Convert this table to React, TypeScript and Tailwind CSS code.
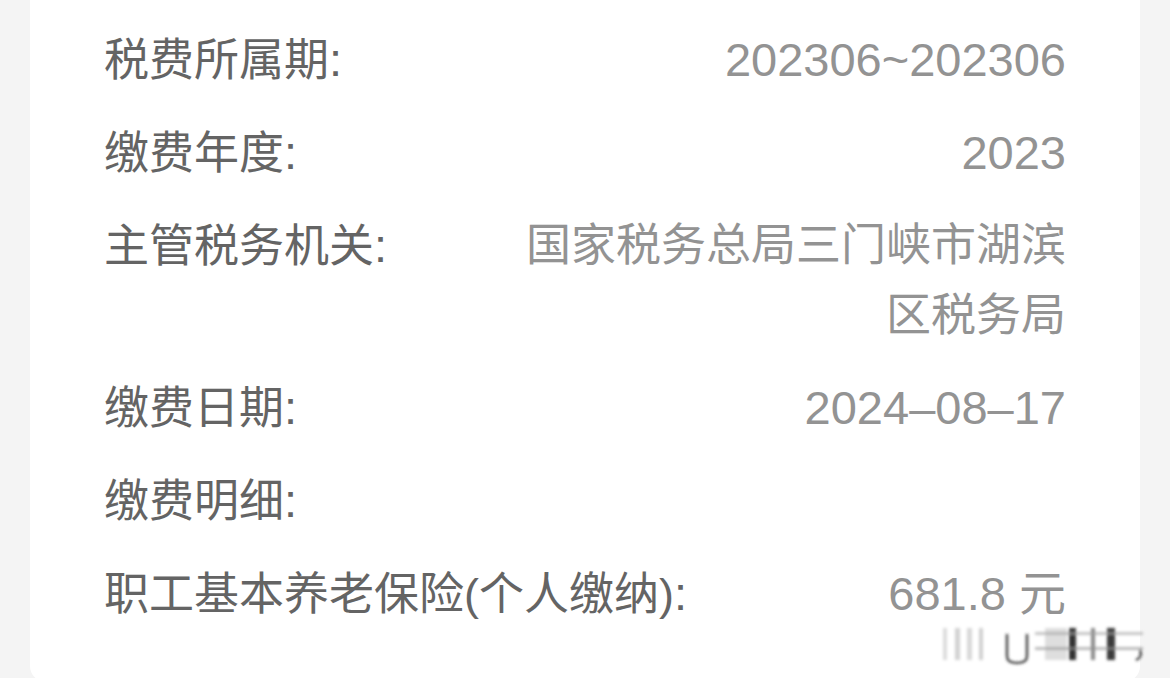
const rows: { label: string; value: string; num?: boolean }[] = [
  { label: "税费所属期", value: "202306~202306", num: true },
  { label: "缴费年度", value: "2023", num: true },
  { label: "主管税务机关", value: "国家税务总局三门峡市湖滨区税务局" },
  { label: "缴费日期", value: "2024–08–17", num: true },
  { label: "缴费明细", value: "" },
  { label: "职工基本养老保险(个人缴纳)", value: "681.8 元", num: true },
];

function Watermark() {
  // cut-off, blurry watermark in the bottom right corner
  return (
    <svg className="absolute left-[935px] top-[620px]" width="215" height="50" viewBox="0 0 215 50">
      <defs>
        <filter id="blur" x="-20%" y="-20%" width="140%" height="140%">
          <feGaussianBlur stdDeviation="1.4" />
        </filter>
      </defs>
      <g filter="url(#blur)">
        <rect x="8" y="8" width="4" height="32" fill="#dcdcdc" />
        <rect x="20" y="8" width="5" height="32" fill="#d2d2d2" />
        <rect x="32" y="8" width="5" height="32" fill="#d8d8d8" />
        <rect x="44" y="8" width="4" height="32" fill="#d0d0d0" />
        <path d="M72 14 V36 Q72 43 82 43 Q92 43 92 36 V14" fill="none" stroke="#333" strokeWidth="2.2" />
        <rect x="110" y="8" width="22" height="32" fill="#dedede" />
        <rect x="134" y="8" width="7" height="32" fill="#333" />
        <rect x="156" y="8" width="4" height="32" fill="#8a8a8a" />
        <rect x="172" y="8" width="8" height="32" fill="#3a3a3a" />
        <rect x="100" y="12" width="108" height="3" fill="#a0a0a0" opacity="0.6" />
        <rect x="100" y="27" width="108" height="3" fill="#909090" opacity="0.6" />
        <path d="M205 30 Q208 37 201 40" fill="none" stroke="#222" strokeWidth="2" />
      </g>
    </svg>
  );
}

export default function App() {
  return (
    <div
      className="relative w-[1170px] h-[678px] overflow-hidden bg-[#f4f4f4] px-[30px]"
      style={{ fontFamily: '"Liberation Sans", "Noto Sans CJK SC", sans-serif' }}
    >
      <div className="bg-white rounded-b-[16px] px-[74px] pt-[25px] pb-[52px] flex flex-col gap-[22px]">
        {rows.map((r) => (
          <div key={r.label} className="flex justify-between items-start leading-[70px]">
            <span className="whitespace-nowrap text-[45px] text-[#646464]">
              {r.label}
              <span className="text-[47px]">:</span>
            </span>
            <span className={`max-w-[560px] text-right text-[#939393] ${r.num ? "text-[47px]" : "text-[45px]"}`}>
              {r.value}
            </span>
          </div>
        ))}
      </div>
      <Watermark />
    </div>
  );
}
